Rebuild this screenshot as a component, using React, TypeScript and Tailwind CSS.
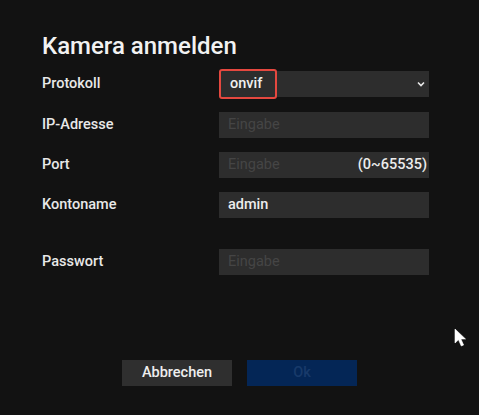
import * as React from "react";

const rowInput = "h-[26px] w-[210px] bg-[#2d2d2d] flex items-center px-[9px] text-[14.5px]";

function Row({
  label,
  className,
  children,
}: {
  label: string;
  className?: string;
  children: React.ReactNode;
}) {
  return (
    <div className={"flex items-center " + (className ?? "")}>
      <div className="w-[177px] text-[14.5px] font-medium text-[#e8e8e8]">{label}</div>
      {children}
    </div>
  );
}

export default function App() {
  return (
    <div
      className="relative w-[479px] h-[415px] bg-[#121212] overflow-hidden flex flex-col"
      style={{ fontFamily: "Roboto, 'Liberation Sans', sans-serif" }}
    >
      <div className="pl-[42px] pt-[31px]">
        <h1 className="text-[24px] leading-[30px] font-medium text-[#f2f2f2]">Kamera anmelden</h1>

        <Row label="Protokoll" className="mt-[10px]">
          <div className="relative h-[26px] w-[210px] bg-[#2d2d2d] flex items-center text-[14.5px] text-[#f0f0f0]">
            <div className="absolute left-0 top-[-2px] h-[30px] w-[58px] rounded-[3px] border-2 border-[#e5483f]" />
            <span className="pl-[11px] font-medium">onvif</span>
            <svg className="ml-auto mr-[4px]" width="8" height="6" viewBox="0 0 8 6">
              <path d="M1 1.5 L4 4.5 L7 1.5" fill="none" stroke="#e8e8e8" strokeWidth="1.6" />
            </svg>
          </div>
        </Row>

        <Row label="IP-Adresse" className="mt-[15px]">
          <div className={rowInput}>
            <span className="text-[#454545]">Eingabe</span>
          </div>
        </Row>

        <Row label="Port" className="mt-[14px]">
          <div className={rowInput + " pr-[2px]"}>
            <span className="text-[#454545]">Eingabe</span>
            <span className="ml-auto font-medium text-[#ececec]">(0~65535)</span>
          </div>
        </Row>

        <Row label="Kontoname" className="mt-[14px]">
          <div className={rowInput}>
            <span className="font-medium text-[#ececec]">admin</span>
          </div>
        </Row>

        <Row label="Passwort" className="mt-[31px]">
          <div className={rowInput}>
            <span className="text-[#454545]">Eingabe</span>
          </div>
        </Row>
      </div>

      <div className="mt-[85px] flex pl-[122px] gap-[15px]">
        <button className="h-[26px] w-[110px] bg-[#2f2f2f] text-[14.5px] font-medium text-[#eeeeee]">
          Abbrechen
        </button>
        <button className="h-[26px] w-[110px] bg-[#042656] text-[14.5px] font-medium text-[#183a6a]">
          Ok
        </button>
      </div>

      <svg className="absolute left-[454px] top-[328px]" width="14" height="21" viewBox="0 0 14 21">
        <path d="M1 1 L1 15 L4.5 11.8 L7.3 18 L9.6 17 L6.9 11 L11.5 11 Z" fill="#ffffff" stroke="#ffffff" strokeWidth="0.6" strokeLinejoin="round" />
      </svg>
    </div>
  );
}
